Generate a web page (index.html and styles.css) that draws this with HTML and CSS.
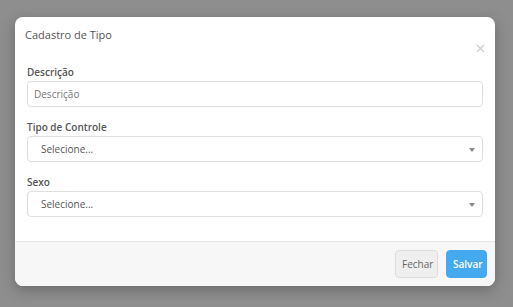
FILE: index.html
```html
<html>
    <head>
        <title>Cadastro de Tipo</title>
        <link rel="stylesheet" href="styles.css">
    </head>
    <body>
        <div class="modal">
            <div class="modal-header">
                <h4 class="modal-title">Cadastro de Tipo</h4>
                <span class="close">
                    <svg width="9" height="9" viewBox="0 0 9 9"><path d="M1 1L8 8M8 1L1 8" stroke="#cfcfcf" stroke-width="1.4"/></svg>
                </span>
            </div>

            <div class="modal-body">
                <div class="field">
                    <label for="descricao">Descrição</label>
                    <div class="control input">Descrição</div>
                </div>

                <div class="field">
                    <label>Tipo de Controle</label>
                    <div class="control select">
                        <span>Selecione...</span>
                        <span class="arrow"></span>
                    </div>
                </div>

                <div class="field">
                    <label>Sexo</label>
                    <div class="control select">
                        <span>Selecione...</span>
                        <span class="arrow"></span>
                    </div>
                </div>
            </div>

            <div class="modal-footer">
                <button class="btn btn-default">Fechar</button>
                <button class="btn btn-primary">Salvar</button>
            </div>
        </div>
    </body>
</html>
```

FILE: styles.css
```css
*{
    box-sizing: border-box;
}

body{
    margin: 0;
    padding: 17px 0 0 15px;
    background-color: #8e8e8e;
    font-family: "Open Sans", "Liberation Sans", sans-serif;
    color: #555;
}

.modal{
    position: relative;
    width: 480px;
    background-color: #fff;
    border-radius: 8px;
    overflow: hidden;
    box-shadow: 0 4px 14px rgba(0, 0, 0, 0.25);
}

.modal-header{
    padding: 11px 10px;
}

.modal-title{
    margin: 0;
    font-size: 11px;
    font-weight: normal;
    line-height: 14px;
    color: #555;
}

.close{
    position: absolute;
    top: 27px;
    right: 10px;
    width: 9px;
    height: 9px;
    line-height: 0;
}

.modal-body{
    padding: 12px 12px 11px 12px;
}

.field{
    margin-bottom: 13px;
}

label{
    display: block;
    font-size: 10px;
    font-weight: 600;
    line-height: 14px;
    margin-bottom: 2px;
    color: #555;
}

.control{
    display: flex;
    align-items: center;
    justify-content: space-between;
    height: 26px;
    border: 1px solid #dedede;
    border-radius: 4px;
    font-size: 10px;
    color: #666;
}

.input{
    padding: 0 6px;
    color: #777;
}

.select{
    padding: 0 7px 0 13px;
    color: #555;
}

.arrow{
    width: 0;
    height: 0;
    border-left: 3px solid transparent;
    border-right: 3px solid transparent;
    border-top: 4px solid #888;
    margin-top: 2px;
}

.modal-footer{
    display: flex;
    justify-content: flex-end;
    gap: 8px;
    padding: 8px 8px 8px 8px;
    background-color: #f7f7f7;
    border-top: 1px solid #e6e6e6;
}

.btn{
    height: 28px;
    padding: 0 6px;
    border-radius: 4px;
    font-family: "Open Sans", "Liberation Sans", sans-serif;
    font-size: 10px;
}

.btn-default{
    width: 43px;
    background-color: #efefef;
    border: 1px solid #dcdcdc;
    color: #666;
}

.btn-primary{
    width: 41px;
    background-color: #45a9ef;
    border: 1px solid #45a9ef;
    color: #fff;
    font-weight: 600;
}
```
